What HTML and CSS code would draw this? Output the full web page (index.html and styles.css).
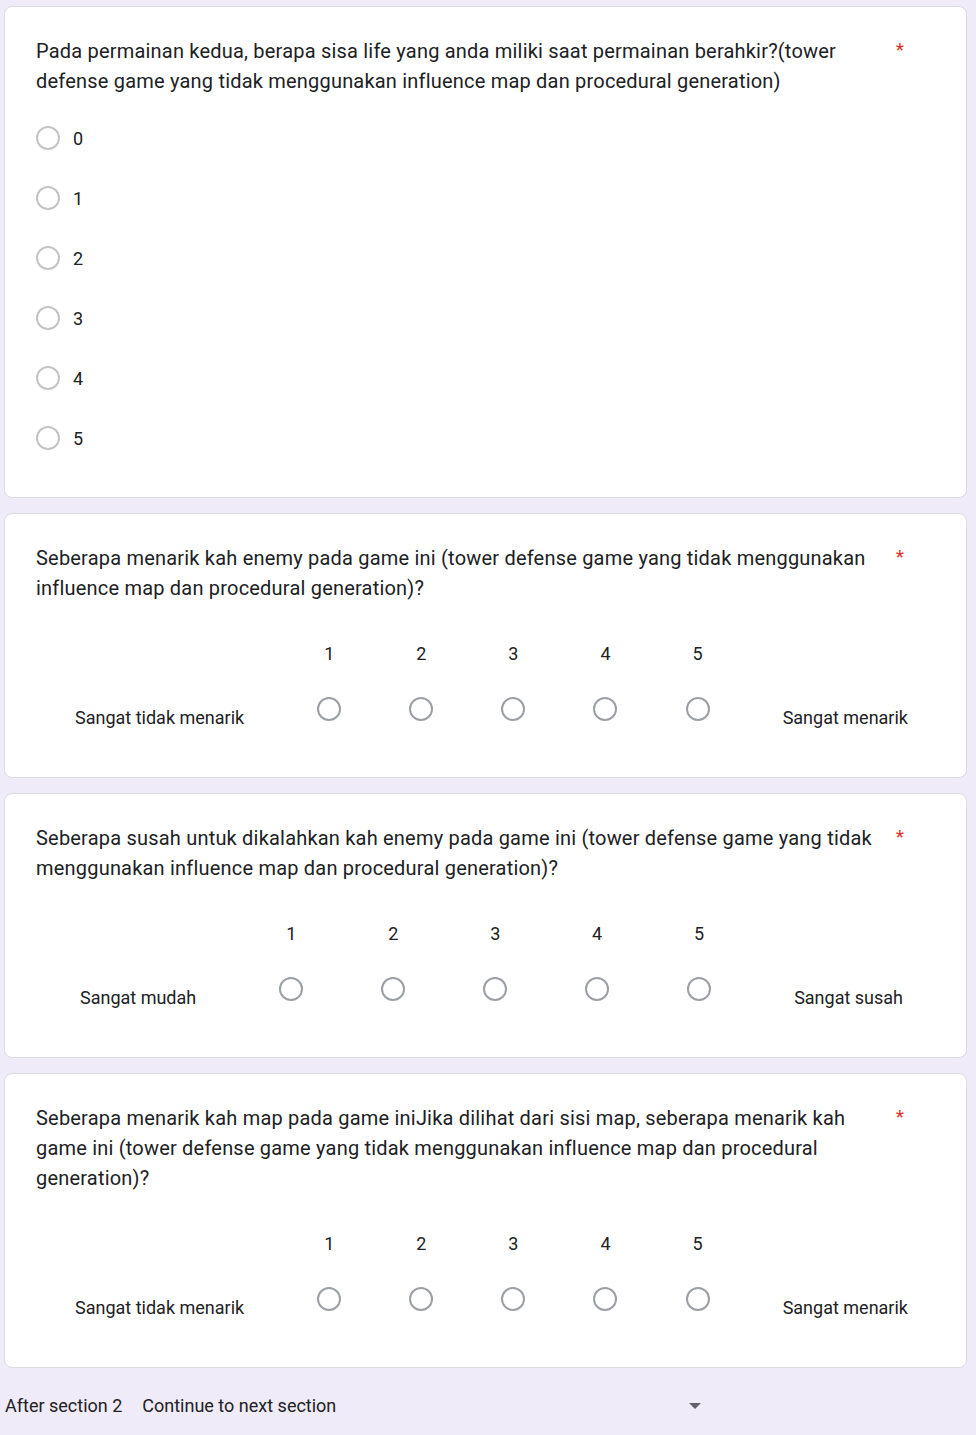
FILE: index.html
```html
<!DOCTYPE html>
<html lang="id">
<head>
<meta charset="utf-8">
<title>Form section</title>
<link rel="stylesheet" href="styles.css">
</head>
<body>
<div class="page">
  <div class="card">
    <div class="title-row">
      <div class="title">Pada permainan kedua, berapa sisa life yang anda miliki saat permainan berahkir?(tower defense game yang tidak menggunakan influence map dan procedural generation)</div>
      <span class="req">*</span>
    </div>
    <div class="options">
      <div class="option"><span class="radio light"></span><span class="opt-label">0</span></div>
      <div class="option"><span class="radio light"></span><span class="opt-label">1</span></div>
      <div class="option"><span class="radio light"></span><span class="opt-label">2</span></div>
      <div class="option"><span class="radio light"></span><span class="opt-label">3</span></div>
      <div class="option"><span class="radio light"></span><span class="opt-label">4</span></div>
      <div class="option"><span class="radio light"></span><span class="opt-label">5</span></div>
    </div>
  </div>

  <div class="card">
    <div class="title-row">
      <div class="title">Seberapa menarik kah enemy pada game ini (tower defense game yang tidak menggunakan influence map dan procedural generation)?</div>
      <span class="req">*</span>
    </div>
    <div class="scale">
      <div class="scale-label">Sangat tidak menarik</div>
      <div class="col"><span class="num">1</span><span class="radio"></span></div>
      <div class="col"><span class="num">2</span><span class="radio"></span></div>
      <div class="col"><span class="num">3</span><span class="radio"></span></div>
      <div class="col"><span class="num">4</span><span class="radio"></span></div>
      <div class="col"><span class="num">5</span><span class="radio"></span></div>
      <div class="scale-label">Sangat menarik</div>
    </div>
  </div>

  <div class="card">
    <div class="title-row">
      <div class="title">Seberapa susah untuk dikalahkan kah enemy pada game ini (tower defense game yang tidak menggunakan influence map dan procedural generation)?</div>
      <span class="req">*</span>
    </div>
    <div class="scale">
      <div class="scale-label">Sangat mudah</div>
      <div class="col"><span class="num">1</span><span class="radio"></span></div>
      <div class="col"><span class="num">2</span><span class="radio"></span></div>
      <div class="col"><span class="num">3</span><span class="radio"></span></div>
      <div class="col"><span class="num">4</span><span class="radio"></span></div>
      <div class="col"><span class="num">5</span><span class="radio"></span></div>
      <div class="scale-label">Sangat susah</div>
    </div>
  </div>

  <div class="card">
    <div class="title-row">
      <div class="title">Seberapa menarik kah map pada game iniJika dilihat dari sisi map, seberapa menarik kah game ini (tower defense game yang tidak menggunakan influence map dan procedural generation)?</div>
      <span class="req">*</span>
    </div>
    <div class="scale">
      <div class="scale-label">Sangat tidak menarik</div>
      <div class="col"><span class="num">1</span><span class="radio"></span></div>
      <div class="col"><span class="num">2</span><span class="radio"></span></div>
      <div class="col"><span class="num">3</span><span class="radio"></span></div>
      <div class="col"><span class="num">4</span><span class="radio"></span></div>
      <div class="col"><span class="num">5</span><span class="radio"></span></div>
      <div class="scale-label">Sangat menarik</div>
    </div>
  </div>

  <div class="footer">
    <span class="after">After section 2</span>
    <div class="select">
      <span>Continue to next section</span>
      <span class="arrow"></span>
    </div>
  </div>
</div>
</body>
</html>
```

FILE: styles.css
```css
html, body {
  margin: 0;
  padding: 0;
  background: #f0ebf8;
}
body {
  font-family: Roboto, "Liberation Sans", sans-serif;
  color: #202124;
}
.page {
  padding: 6px 9px 0 4px;
}
.card {
  background: #fff;
  border: 1px solid #dadce0;
  border-radius: 8px;
  padding: 29px 19px 29px 31px;
  margin-bottom: 15px;
}
.title-row {
  display: flex;
  align-items: flex-start;
}
.title {
  flex: 1;
  font-size: 20px;
  line-height: 30px;
  letter-spacing: 0.2px;
  color: #202124;
}
.req {
  color: #d93025;
  font-size: 19px;
  line-height: 28px;
  margin-left: 14px;
  margin-right: 43px;
}
.options {
  margin-top: 12px;
}
.option {
  display: flex;
  align-items: center;
  height: 60px;
}
.radio {
  display: block;
  box-sizing: border-box;
  width: 24px;
  height: 24px;
  border: 2px solid #9aa0a6;
  border-radius: 50%;
  flex: none;
}
.radio.light {
  border-color: #c4c4c4;
}
.opt-label {
  font-size: 18px;
  margin-left: 13px;
}
.scale {
  display: flex;
  align-items: flex-start;
  margin-top: 36px;
  margin-bottom: 15px;
}
.scale-label {
  flex: 1 1 auto;
  padding: 64px 16px 0;
  font-size: 18px;
  line-height: 30px;
  text-align: center;
  white-space: nowrap;
}
.col {
  flex: 1 1 46px;
  display: flex;
  flex-direction: column;
  align-items: center;
}
.num {
  font-size: 18px;
  line-height: 30px;
  margin-bottom: 28px;
}
.footer {
  display: flex;
  align-items: center;
  margin-top: 23px;
  padding-left: 1px;
  font-size: 18px;
  line-height: 30px;
  height: 30px;
}
.after {
  margin-right: 20px;
}
.select {
  display: flex;
  align-items: center;
  width: 567px;
  justify-content: space-between;
}
.arrow {
  width: 0;
  height: 0;
  border-left: 6px solid transparent;
  border-right: 6px solid transparent;
  border-top: 6px solid #5f6368;
  margin-right: 8px;
}
```
